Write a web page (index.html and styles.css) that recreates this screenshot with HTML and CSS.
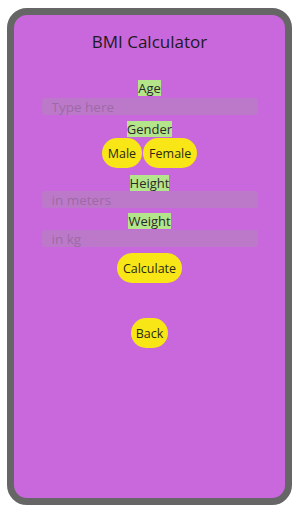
FILE: index.html
```html
<!DOCTYPE html>
<html>
<head>
<meta charset="utf-8">
<link rel="stylesheet" href="styles.css">
</head>
<body>
<div class="frame">
  <div class="screen">
    <h1 class="title">BMI Calculator</h1>
    <span class="label label-age">Age</span>
    <input class="field field-age" type="text" placeholder="Type here">
    <span class="label label-gender">Gender</span>
    <div class="choices">
      <button class="btn">Male</button>
      <button class="btn">Female</button>
    </div>
    <span class="label label-height">Height</span>
    <input class="field field-height" type="text" placeholder="in meters">
    <span class="label label-weight">Weight</span>
    <input class="field field-weight" type="text" placeholder="in kg">
    <button class="btn btn-calc">Calculate</button>
    <button class="btn btn-back">Back</button>
  </div>
</div>
</body>
</html>
```

FILE: styles.css
```css
html, body {
  margin: 0;
  padding: 0;
  background: #ffffff;
}
body {
  padding: 8px 0 0 7px;
  font-family: "Open Sans", "Noto Sans", sans-serif;
  color: #222;
}
.frame {
  width: 285px;
  height: 497px;
  box-sizing: border-box;
  border: 7px solid #666666;
  border-radius: 20px;
  background: #c868dc;
  overflow: hidden;
}
.screen {
  display: flex;
  flex-direction: column;
  align-items: center;
  height: 100%;
}
.title {
  margin: 15px 0 0 0;
  font-size: 17px;
  font-weight: 400;
  line-height: 24px;
  color: #1e1a22;
}
.label {
  background: #b5e58a;
  font-size: 13px;
  line-height: 16px;
  color: #2a2a2a;
}
.label-age { margin-top: 26px; }
.label-gender { margin-top: 6px; }
.label-height { margin-top: 7px; }
.label-weight { margin-top: 5px; }
.field {
  width: 216px;
  height: 17px;
  box-sizing: border-box;
  margin: 0;
  padding: 0 0 0 10px;
  border: none;
  border-radius: 3px;
  background: #bc79ca;
  font-family: inherit;
  font-size: 13.5px;
  color: #222;
  outline: none;
}
.field-age { margin-top: 2px; }
.field-height { margin-top: 0; }
.field-weight { margin-top: 1px; }
.field::placeholder {
  color: #9c6aa6;
}
.choices {
  display: flex;
  gap: 1px;
  margin-top: 1px;
}
.btn {
  height: 30px;
  padding: 0 6px;
  border: none;
  border-radius: 15px;
  background: #f8e616;
  font-family: inherit;
  font-size: 12.5px;
  color: #2a2a1a;
}
.btn-calc {
  margin-top: 6px;
}
.btn-back {
  margin-top: 35px;
  padding: 0 5px;
}
```
